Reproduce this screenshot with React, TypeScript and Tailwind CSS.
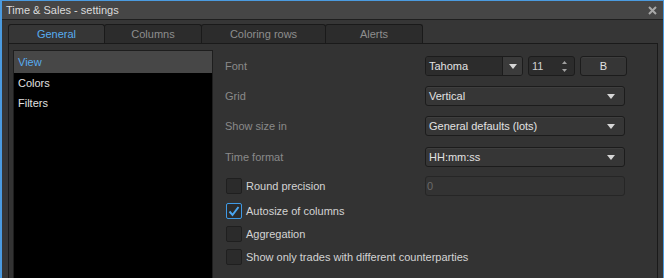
import { Fragment } from "react";

const tabs = [
  { label: "General", width: "w-[97px]", active: true },
  { label: "Columns", width: "w-[98px]", active: false },
  { label: "Coloring rows", width: "w-[125px]", active: false },
  { label: "Alerts", width: "w-[98px]", active: false },
];

const sections = ["View", "Colors", "Filters"];

function Arrow() {
  return (
    <svg width="8" height="5" viewBox="0 0 8 5" className="shrink-0">
      <path d="M0 0h8L4 5z" fill="#d6d6d6" />
    </svg>
  );
}

function Combo({ value }: { value: string }) {
  return (
    <div className="flex h-[20px] w-[200px] items-center justify-between rounded-[3px] border border-[#1c1c1c] bg-[#363636] pl-[3px] pr-[9px] text-[#e2e2e2] shadow-[inset_0_1px_0_#3e3e3e]">
      <span>{value}</span>
      <Arrow />
    </div>
  );
}

function CheckBox({ checked }: { checked?: boolean }) {
  return (
    <div
      className={
        checked
          ? "flex h-[16px] w-[16px] shrink-0 items-center justify-center rounded-[2px] border border-[#3f9ae6] bg-[#2b2b2b]"
          : "h-[16px] w-[16px] shrink-0 rounded-[2px] border border-[#1f1f1f] bg-[#2b2b2b]"
      }
    >
      {checked && (
        <svg width="12" height="11" viewBox="0 0 12 11">
          <path d="M1.5 5.5l3 3.5 6-8" fill="none" stroke="#4aa6f0" strokeWidth="2" />
        </svg>
      )}
    </div>
  );
}

function CheckRow({ label, checked }: { label: string; checked?: boolean }) {
  return (
    <div className="flex h-[16px] items-center gap-[4px] text-[#d4d4d4]">
      <CheckBox checked={checked} />
      <span>{label}</span>
    </div>
  );
}

export default function App() {
  return (
    <div className="h-[278px] w-[664px] overflow-hidden border-r border-t border-l-2 border-[#4b9be0] bg-[#363636] font-['Liberation_Sans',Arial,sans-serif] text-[11px]">
      {/* title bar */}
      <div className="flex h-[19px] items-center justify-between border-b border-[#1f1f1f] bg-[#464646] pl-[4px] pr-[6px] text-[#dcdcdc]">
        <span>Time &amp; Sales - settings</span>
        <svg width="9" height="9" viewBox="0 0 9 9">
          <path d="M1 1l7 7M8 1L1 8" stroke="#a8a8a8" strokeWidth="2" />
        </svg>
      </div>

      <div className="pl-[6px] pr-[6px] pt-[4px]">
        {/* tabs */}
        <div className="flex h-[19px]">
          {tabs.map((t) => (
            <div
              key={t.label}
              className={
                t.active
                  ? `${t.width} -mr-px flex items-center justify-center rounded-t-[3px] border border-b-0 border-[#1a1a1a] bg-[#363636] text-[#58acf0]`
                  : `${t.width} -mr-px flex items-center justify-center rounded-t-[3px] border border-b-0 border-[#1a1a1a] bg-[#2c2c2c] text-[#8e8e8e]`
              }
            >
              {t.label}
            </div>
          ))}
        </div>

        {/* panel */}
        <div className="flex h-[240px] w-[650px] border border-b-0 border-[#1a1a1a] bg-[#333333] pl-[4px] pt-[6px]">
          <div className="h-[240px] w-[200px] border border-[#1e1e1e] bg-black">
            {sections.map((s, i) => (
              <div
                key={s}
                className={
                  i === 0
                    ? "flex h-[22px] items-center bg-[#474747] pl-[4px] text-[#58acf0]"
                    : "flex h-[20px] items-center pl-[4px] text-[#e0e0e0]"
                }
              >
                {s}
              </div>
            ))}
          </div>

          <div className="flex flex-col pl-[12px] pt-[6px]">
            {/* Font */}
            <div className="flex h-[20px] items-center">
              <span className="w-[200px] text-[#8a8a8a]">Font</span>
              <div className="flex gap-[5px]">
                <div className="flex h-[20px] w-[98px] overflow-hidden rounded-[3px] border border-[#1c1c1c]">
                  <div className="flex flex-1 items-center bg-[#2c2c2c] pl-[3px] text-[#e2e2e2]">Tahoma</div>
                  <div className="flex w-[20px] items-center justify-center border-l border-[#1c1c1c] bg-[#3b3b3b]">
                    <Arrow />
                  </div>
                </div>
                <div className="flex h-[20px] w-[47px] items-center justify-between rounded-[3px] border border-[#1c1c1c] bg-[#2c2c2c] pl-[3px] pr-[7px] text-[#d0d0d0]">
                  <span>11</span>
                  <div className="flex flex-col gap-[5px]">
                    <svg width="5" height="3" viewBox="0 0 5 3">
                      <path d="M0 3h5L2.5 0z" fill="#a0a0a0" />
                    </svg>
                    <svg width="5" height="3" viewBox="0 0 5 3">
                      <path d="M0 0h5L2.5 3z" fill="#a0a0a0" />
                    </svg>
                  </div>
                </div>
                <div className="flex h-[20px] w-[47px] items-center justify-center rounded-[3px] border border-[#1c1c1c] bg-[#363636] text-[#e2e2e2] shadow-[inset_0_1px_0_#3e3e3e]">
                  B
                </div>
              </div>
            </div>

            {[
              ["Grid", "Vertical", "mt-[10px]"],
              ["Show size in", "General defaults (lots)", "mt-[10px]"],
              ["Time format", "HH:mm:ss", "mt-[11px]"],
            ].map(([label, value, mt]) => (
              <Fragment key={label}>
                <div className={`${mt} flex h-[20px] items-center`}>
                  <span className="w-[200px] text-[#8a8a8a]">{label}</span>
                  <Combo value={value} />
                </div>
              </Fragment>
            ))}

            {/* Round precision */}
            <div className="mt-[9px] flex h-[20px] items-center">
              <div className="w-[200px] pl-[1px]">
                <CheckRow label="Round precision" />
              </div>
              <div className="flex h-[20px] w-[200px] items-center rounded-[3px] border border-[#262626] bg-[#333333] pl-[1px] text-[#6a6a6a]">
                0
              </div>
            </div>

            <div className="mt-[7px] flex flex-col gap-[7px] pl-[1px]">
              <CheckRow label="Autosize of columns" checked />
              <CheckRow label="Aggregation" />
              <CheckRow label="Show only trades with different counterparties" />
            </div>
          </div>
        </div>
      </div>
    </div>
  );
}
